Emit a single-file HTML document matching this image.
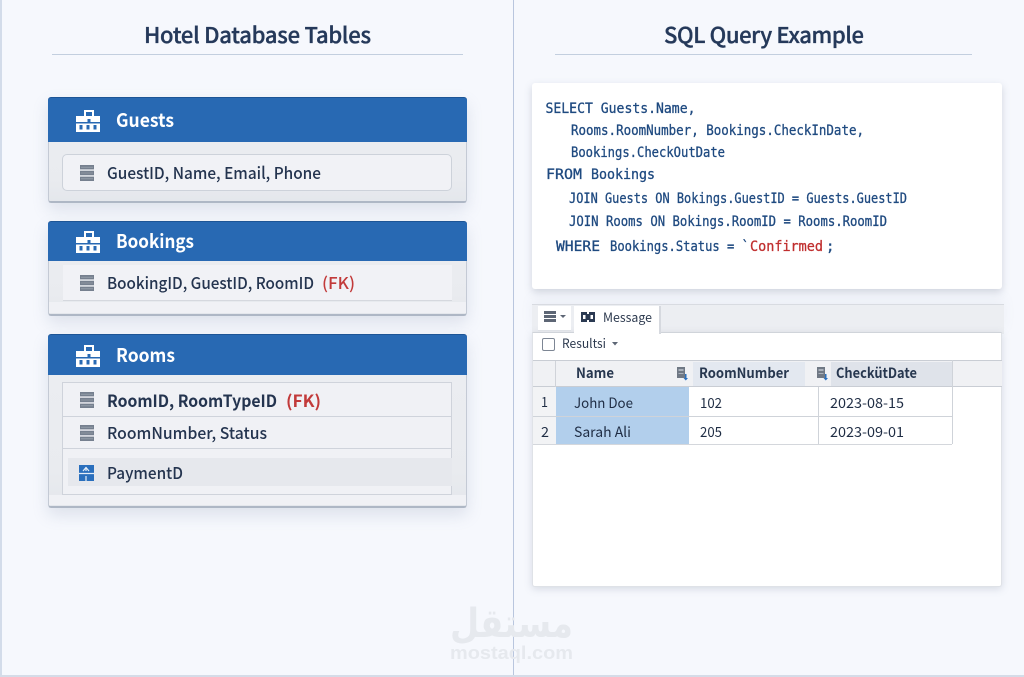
<!DOCTYPE html>
<html><head><meta charset="utf-8"><style>
html,body{margin:0;padding:0;width:1024px;height:677px;overflow:hidden;background:#f6f8fd}
.b{position:absolute;box-sizing:border-box}
.card{background:linear-gradient(#eceef2,#e9ebef 80%,#e4e7ec);border:1px solid #c4cad5;border-top:0;border-bottom:2px solid #aeb7c5;border-radius:3px;box-shadow:0 7px 16px rgba(120,135,165,.2)}
.hd{background:#2869b3;border-top:1px solid #1d5596;border-radius:3px 3px 0 0}
svg{position:absolute;left:0;top:0}
text{font-family:"Noto Sans CJK JP","Liberation Sans",sans-serif}
.m{font-family:"DejaVu Sans Mono","Liberation Mono",monospace;font-size:14px;fill:#1f4a80;stroke:#1f4a80;stroke-width:.3}
.r{font-size:16.500px;fill:#24344f;font-weight:500}
.h{font-size:19px;fill:#fff;font-weight:700}
.t{font-size:22px;fill:#25395a;font-weight:500;stroke:#25395a;stroke-width:.35}
.c{font-size:14px;fill:#1f2d44;font-weight:400}
.ch{font-size:14px;fill:#27374f;font-weight:700}
</style></head><body>
<div class="b" style="left:0;top:0;width:2px;height:677px;background:#d3dcea"></div>
<div class="b" style="left:512.500px;top:0;width:1.500px;height:677px;background:#b9c6de"></div>
<div class="b" style="left:0;top:675px;width:1024px;height:2px;background:#d5dce8"></div>
<div class="b" style="left:52px;top:54px;width:411px;height:1px;background:#c3cfdf"></div>
<div class="b" style="left:555px;top:54px;width:417px;height:1px;background:#c3cfdf"></div>

<div class="b card" style="left:48px;top:97px;width:419px;height:106px"></div>
<div class="b hd" style="left:48px;top:97px;width:419px;height:45px"></div>
<div class="b" style="left:62px;top:154px;width:390px;height:37px;background:#f1f2f6;border:1px solid #cdd2da;border-radius:5px"></div>

<div class="b card" style="left:48px;top:221px;width:419px;height:95px"></div>
<div class="b hd" style="left:48px;top:221px;width:419px;height:40px"></div>
<div class="b" style="left:63px;top:265px;width:389px;height:36px;background:#f1f2f6;border-bottom:1px solid #d5d8de"></div>
<div class="b" style="left:49px;top:302px;width:417px;height:11px;background:#f0f1f5"></div>

<div class="b card" style="left:48px;top:334px;width:419px;height:174px"></div>
<div class="b hd" style="left:48px;top:334px;width:419px;height:41px"></div>
<div class="b" style="left:62px;top:382px;width:390px;height:113px;background:#f0f1f5;border:1px solid #cfd3db"></div>
<div class="b" style="left:62px;top:416px;width:390px;height:1px;background:#cfd3db"></div>
<div class="b" style="left:62px;top:448px;width:390px;height:1px;background:#cfd3db"></div>
<div class="b" style="left:68px;top:458px;width:384px;height:28px;background:#e6e8ed"></div>
<div class="b" style="left:49px;top:495px;width:417px;height:10px;background:#f0f1f5"></div>

<div class="b" style="left:532px;top:83px;width:470px;height:206px;background:#fff;border-radius:3px;box-shadow:0 3px 8px rgba(120,130,150,.3)"></div>

<div class="b" style="left:532px;top:304px;width:472px;height:30px;background:#eceef2;border-top:1px solid #d8dbe1;box-shadow:0 -6px 12px rgba(130,140,160,.08)"></div>
<div class="b" style="left:532px;top:332px;width:470px;height:255px;background:#fff;border-radius:0 0 3px 3px;border:1px solid #dfe2e7;border-top:1px solid #d0d4da;box-shadow:0 2px 8px rgba(120,130,150,.25)"></div>
<div class="b" style="left:538px;top:306px;width:33px;height:25px;background:#fff;border-bottom:1px solid #dfe2e7"></div>
<div class="b" style="left:574px;top:306px;width:87px;height:28px;background:#fff;border-right:2px solid #d6d9df"></div>
<div class="b" style="left:533px;top:360px;width:469px;height:27px;background:#f0f1f4;border-top:1px solid #c9cdd4;border-bottom:1px solid #c9cdd4"></div>
<div class="b" style="left:555px;top:361px;width:1px;height:83px;background:#d0d3d9"></div>
<div class="b" style="left:693px;top:362px;width:112px;height:24px;background:#e3e8f0"></div>
<div class="b" style="left:831px;top:362px;width:121px;height:24px;background:#dfe3ea"></div>
<div class="b" style="left:533px;top:387px;width:23px;height:57px;background:#f2f3f5"></div>
<div class="b" style="left:556px;top:387px;width:133px;height:57px;background:#b2cfec"></div>
<div class="b" style="left:533px;top:416px;width:419px;height:1px;background:#cfd3d9"></div>
<div class="b" style="left:533px;top:444px;width:419px;height:1px;background:#d4d7dc"></div>
<div class="b" style="left:818px;top:387px;width:1px;height:57px;background:#cfd3d9"></div>
<div class="b" style="left:952px;top:360px;width:1px;height:84px;background:#cfd3d9"></div>

<svg width="1024" height="677" viewBox="0 0 1024 677">
<defs>
<g id="hi"><path fill="#fff" fill-rule="evenodd" d="M8 0h10v6h6v6H14.500V9h-3v3H0V6h8z M10 2v4h6V2z"/><path fill="#fff" fill-rule="evenodd" d="M0 13.500h24V22H0z M3.500 15v4.500h3V15z M10.500 15v4.500h3V15z M17.500 15v4.500h3V15z"/></g>
<g id="ri"><path fill="#76808f" d="M0 0h14v4.400H0z M0 5.800h14v4.400H0z M0 11.600h14V16H0z"/><path stroke="#a3abb6" stroke-width=".6" d="M1 2.200h12M1 8h12M1 13.800h12"/></g>
<g id="si"><path fill="#6f7884" d="M1 0h8v11H1z"/><path fill="#aab1bb" d="M2.500 2h5v2h-5z M2.500 6h5v1h-5z"/></g>
</defs>

<text class="t" x="144" y="43" textLength="227" lengthAdjust="spacing">Hotel Database Tables</text>
<text class="t" x="664" y="43" textLength="200" lengthAdjust="spacing">SQL Query Example</text>

<use href="#hi" x="76" y="110"/><use href="#hi" x="76" y="231"/><use href="#hi" x="76" y="345"/>
<text class="h" x="116" y="127" textLength="58" lengthAdjust="spacingAndGlyphs">Guests</text>
<text class="h" x="116" y="248" textLength="78" lengthAdjust="spacingAndGlyphs">Bookings</text>
<text class="h" x="116" y="362" textLength="59" lengthAdjust="spacingAndGlyphs">Rooms</text>

<use href="#ri" x="80" y="165"/><use href="#ri" x="80" y="275"/><use href="#ri" x="80" y="392"/><use href="#ri" x="80" y="425"/>
<path fill="#2a6fbd" d="M79 465h15v16H79z"/><path stroke="#e6eef8" stroke-width="1.200" fill="none" d="M79 473.500h15M86 467v4M86 476v5M83 471l3-3.500 3 3.500"/>

<text class="r" x="107" y="179" textLength="214" lengthAdjust="spacingAndGlyphs">GuestID, Name, Email, Phone</text>
<text class="r" x="107" y="289" textLength="207" lengthAdjust="spacingAndGlyphs">BookingID, GuestID, RoomID</text>
<text class="r" x="322" y="289" textLength="33" lengthAdjust="spacingAndGlyphs" style="fill:#c23a3a">(FK)</text>
<text class="r" x="107" y="407" textLength="170" lengthAdjust="spacingAndGlyphs" style="font-weight:700">RoomID, RoomTypeID</text>
<text class="r" x="286" y="407" textLength="35" lengthAdjust="spacingAndGlyphs" style="fill:#c23a3a;font-weight:700">(FK)</text>
<text class="r" x="107" y="439" textLength="160" lengthAdjust="spacingAndGlyphs">RoomNumber, Status</text>
<text class="r" x="107" y="479" textLength="76" lengthAdjust="spacingAndGlyphs">PaymentD</text>

<text class="m" x="545.500" y="113" textLength="150" lengthAdjust="spacingAndGlyphs">SELECT Guests.Name,</text>
<text class="m" x="571" y="135" textLength="293" lengthAdjust="spacingAndGlyphs">Rooms.RoomNumber, Bookings.CheckInDate,</text>
<text class="m" x="571" y="157" textLength="154" lengthAdjust="spacingAndGlyphs">Bookings.CheckOutDate</text>
<text class="m" x="546" y="179" textLength="36" lengthAdjust="spacingAndGlyphs">FROM</text>
<text class="m" x="591" y="179" textLength="64" lengthAdjust="spacingAndGlyphs">Bookings</text>
<text class="m" x="569" y="203" textLength="338" lengthAdjust="spacingAndGlyphs">JOIN Guests ON Bokings.GuestID = Guests.GuestID</text>
<text class="m" x="569" y="226" textLength="318" lengthAdjust="spacingAndGlyphs">JOIN Rooms ON Bokings.RoomID = Rooms.RoomID</text>
<text class="m" x="556" y="251" textLength="44" lengthAdjust="spacingAndGlyphs">WHERE</text>
<text class="m" x="610" y="251" textLength="139" lengthAdjust="spacingAndGlyphs">Bookings.Status = `</text>
<text class="m" x="750" y="251" textLength="73" lengthAdjust="spacingAndGlyphs" style="fill:#c02f2f;stroke:#c02f2f">Confirmed</text>
<text class="m" x="826" y="251">;</text>

<path fill="#5d6675" d="M544 311h12v3h-12z M544 315h12v3h-12z M544 319h12v3h-12z"/>
<path fill="#5d6675" d="M560 315h6l-3 3z"/>
<path fill="#2b3a52" d="M581 312h14v10h-14z"/><path fill="#fff" d="M587 312h2v2h-2z M587 320h2v2h-2z M583 315h2.500v4H583z M590.500 315h2.500v4h-2.500z"/>
<text x="603" y="322" font-size="12.500" fill="#2d3a4f" textLength="49" lengthAdjust="spacingAndGlyphs">Message</text>

<rect x="542.500" y="338.500" width="12" height="12" rx="1.500" fill="#fff" stroke="#7d8694"/>
<text x="562" y="348" font-size="12.500" fill="#2d3a4f" textLength="44" lengthAdjust="spacingAndGlyphs">Resultsi</text>
<path fill="#5d6675" d="M612 342h6l-3 3.500z"/>

<text class="ch" x="576" y="378" textLength="38" lengthAdjust="spacingAndGlyphs">Name</text>
<use href="#si" x="676" y="367"/><path fill="#2a6fbd" d="M685 374h1.500v4h1.500l-2.200 2.500-2.300-2.500h1.500z"/>
<text class="ch" x="699" y="378" textLength="90" lengthAdjust="spacingAndGlyphs">RoomNumber</text>
<use href="#si" x="816" y="367"/><path fill="#2a6fbd" d="M825 374h1.500v4h1.500l-2.200 2.500-2.300-2.500h1.500z"/>
<text class="ch" x="836" y="378" textLength="81" lengthAdjust="spacingAndGlyphs">CheckütDate</text>

<text class="c" x="541" y="407" textLength="7" lengthAdjust="spacingAndGlyphs">1</text>
<text class="c" x="541" y="437" textLength="8" lengthAdjust="spacingAndGlyphs">2</text>
<text class="c" x="574" y="408" textLength="59" lengthAdjust="spacingAndGlyphs">John Doe</text>
<text class="c" x="574" y="437" textLength="57" lengthAdjust="spacingAndGlyphs">Sarah Ali</text>
<text class="c" x="700" y="408" textLength="22" lengthAdjust="spacingAndGlyphs">102</text>
<text class="c" x="700" y="437" textLength="22" lengthAdjust="spacingAndGlyphs">205</text>
<text class="c" x="830" y="408" textLength="74" lengthAdjust="spacingAndGlyphs">2023-08-15</text>
<text class="c" x="830" y="437" textLength="74" lengthAdjust="spacingAndGlyphs">2023-09-01</text>

<text x="450" y="637" font-size="40" font-weight="700" fill="#e6e9ee" textLength="123" lengthAdjust="spacingAndGlyphs" style="font-family:'DejaVu Sans',sans-serif">مستقل</text>
<text x="450" y="659" font-size="18" font-weight="700" fill="#e6e9ee" textLength="123" lengthAdjust="spacingAndGlyphs" style="font-family:'Liberation Sans',sans-serif">mostaql.com</text>
</svg>
</body></html>
